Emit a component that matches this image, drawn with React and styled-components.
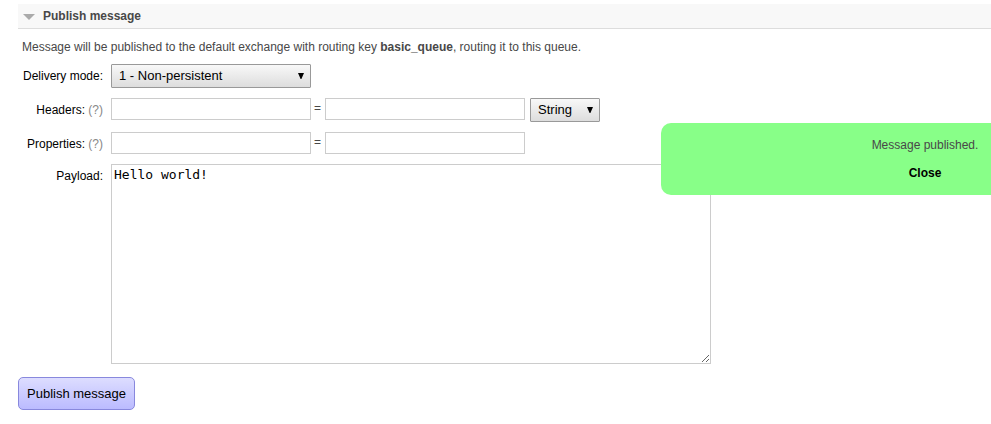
import React, { useState } from "react";
import styled, { createGlobalStyle } from "styled-components";

const GlobalStyle = createGlobalStyle`
  * { box-sizing: border-box; }
  body {
    margin: 0;
    background: #fff;
    color: #484848;
    font: 12px/20px "Liberation Sans", Arial, sans-serif;
  }
`;

const Page = styled.main`
  position: relative;
  overflow: hidden;
  padding: 4px 0 14px 18px;
`;

const SectionHeading = styled.h2`
  display: flex;
  align-items: center;
  gap: 8px;
  margin: 0;
  padding: 2px 5px;
  border-bottom: 1px solid #ddd;
  background: #f8f8f8;
  font-size: 12px;
  line-height: 20px;
`;

const Disclosure = styled.svg`
  flex: none;
  width: 12px;
  height: 6px;
  margin-top: 2px;
`;

const Intro = styled.p`
  margin: 8px 0 7px;
  padding-left: 4px;
`;

const Fields = styled.div`
  display: grid;
  grid-template-columns: max-content 1fr;
  column-gap: 8px;
  row-gap: 10px;
  align-items: start;
  padding-left: 5px;
`;

const FieldLabel = styled.label`
  padding-top: 2px;
  color: #000;
  text-align: right;
`;

const Help = styled.span`
  color: #888;
`;

const Controls = styled.div`
  display: flex;
  align-items: flex-start;
`;

const Equals = styled.span`
  flex: none;
  width: 14px;
  padding-left: 3px;
`;

const TextInput = styled.input`
  width: 200px;
  height: 22px;
  padding: 2px;
  border: 1px solid #ccc;
  background: #fff;
  font: 13px "Liberation Sans", Arial, sans-serif;
`;

const SelectFrame = styled.span`
  position: relative;
  display: inline-flex;
  width: ${(p) => p.$width};
  margin-left: ${(p) => p.$spaced ? "5px" : "0"};
`;

const SelectInput = styled.select`
  appearance: none;
  width: 100%;
  height: 24px;
  padding: 1px 20px 3px 7px;
  border: 1px solid #999;
  border-radius: 1px;
  background: linear-gradient(#f8f8f8, #ddd);
  color: #000;
  font: 13px "Liberation Sans", Arial, sans-serif;
`;

const Arrow = styled.svg`
  position: absolute;
  top: 9px;
  right: 7px;
  width: 6px;
  height: 6px;
  pointer-events: none;
`;

const Payload = styled.textarea`
  display: block;
  width: 600px;
  max-width: 100%;
  height: 200px;
  padding: 2px;
  border: 1px solid #ccc;
  background: #fff;
  color: #000;
  font: 13px/15px "DejaVu Sans Mono", monospace;
  resize: both;
`;

const PublishButton = styled.button`
  display: block;
  margin-top: 13px;
  padding: 8px;
  border: 1px solid #88d;
  border-radius: 5px;
  background: linear-gradient(#ddf, #bbf);
  color: #000;
  font: 13px/15px "Liberation Sans", Arial, sans-serif;
`;

const Notice = styled.div`
  position: absolute;
  top: 123px;
  right: -198px;
  width: 528px;
  padding: 12px;
  border-radius: 10px;
  background: #8f8;
  text-align: center;
`;

const NoticeText = styled.p`
  margin: 0 0 8px;
`;

const CloseButton = styled.button`
  padding: 0;
  border: 0;
  background: none;
  color: #000;
  font: bold 12px/20px "Liberation Sans", Arial, sans-serif;
  display: block;
  margin: 0 auto;
`;

function Select({ width, spaced, options, ...rest }) {
  return (
    <SelectFrame $width={width} $spaced={spaced}>
      <SelectInput {...rest}>
        {options.map((o) => <option key={o}>{o}</option>)}
      </SelectInput>
      <Arrow viewBox="0 0 6 6" aria-hidden="true">
        <path d="M0 0h6L3.4 6h-.8z" />
      </Arrow>
    </SelectFrame>
  );
}

function PairField({ id, label, children }) {
  return (
    <>
      <FieldLabel htmlFor={id}>{label}: <Help>(?)</Help></FieldLabel>
      <Controls>
        <TextInput id={id} type="text" />
        <Equals>=</Equals>
        <TextInput type="text" aria-label={`${label} value`} />
        {children}
      </Controls>
    </>
  );
}

export default function App() {
  const [noticeOpen, setNoticeOpen] = useState(true);

  return (
    <Page>
      <GlobalStyle />
      <SectionHeading>
        <Disclosure viewBox="0 0 12 6" aria-hidden="true">
          <path d="M0 0h12L6 6z" fill="#aaa" />
        </Disclosure>
        Publish message
      </SectionHeading>
      <form onSubmit={(e) => { e.preventDefault(); setNoticeOpen(true); }}>
        <Intro>
          Message will be published to the default exchange with routing key <b>basic_queue</b>, routing it to this queue.
        </Intro>
        <Fields>
          <FieldLabel htmlFor="mode">Delivery mode:</FieldLabel>
          <Controls>
            <Select id="mode" width="200px" options={["1 - Non-persistent", "2 - Persistent"]} />
          </Controls>
          <PairField id="headers" label="Headers">
            <Select
              aria-label="Header type"
              width="70px"
              spaced
              options={["String", "Number", "Boolean", "List"]}
            />
          </PairField>
          <PairField id="properties" label="Properties" />
          <FieldLabel htmlFor="payload">Payload:</FieldLabel>
          <Payload id="payload" defaultValue="Hello world!" spellCheck={false} />
        </Fields>
        <PublishButton type="submit">Publish message</PublishButton>
      </form>
      {noticeOpen && (
        <Notice role="status">
          <NoticeText>Message published.</NoticeText>
          <CloseButton type="button" onClick={() => setNoticeOpen(false)}>Close</CloseButton>
        </Notice>
      )}
    </Page>
  );
}
